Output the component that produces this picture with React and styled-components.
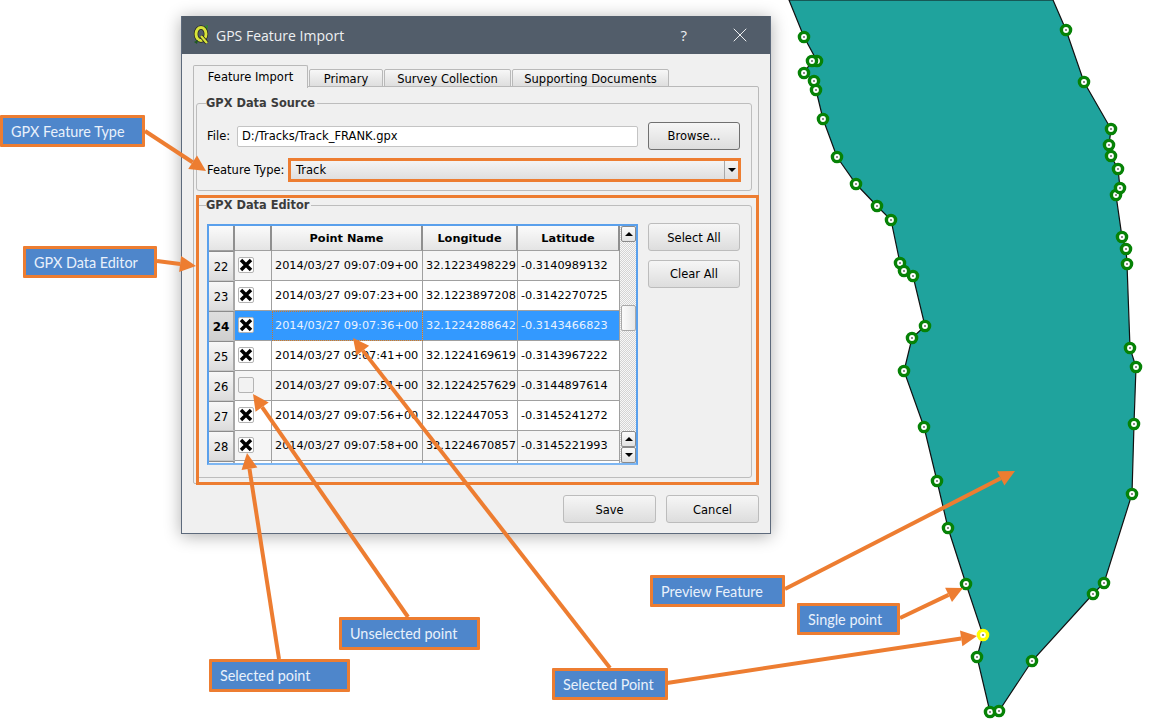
import React from "react";
import styled, { createGlobalStyle } from "styled-components";
import { X } from "lucide-react";

const ORANGE = "#ed7d31";

const rows = [
  { id: 22, on: true, name: "2014/03/27 09:07:09+00", lon: "32.1223498229", lat: "-0.3140989132", tone: "#f5f5f5" },
  { id: 23, on: true, name: "2014/03/27 09:07:23+00", lon: "32.1223897208", lat: "-0.3142270725", tone: "#ffffff" },
  { id: 24, on: true, name: "2014/03/27 09:07:36+00", lon: "32.1224288642", lat: "-0.3143466823", tone: "#f5f5f5", selected: true },
  { id: 25, on: true, name: "2014/03/27 09:07:41+00", lon: "32.1224169619", lat: "-0.3143967222", tone: "#ffffff" },
  { id: 26, on: false, name: "2014/03/27 09:07:51+00", lon: "32.1224257629", lat: "-0.3144897614", tone: "#f5f5f5" },
  { id: 27, on: true, name: "2014/03/27 09:07:56+00", lon: "32.122447053", lat: "-0.3145241272", tone: "#ffffff" },
  { id: 28, on: true, name: "2014/03/27 09:07:58+00", lon: "32.1224670857", lat: "-0.3145221993", tone: "#f5f5f5" },
];

const outline = [
  [789, 0], [804, 37], [817, 61], [812, 61], [804, 73], [814, 81], [816, 90], [823, 119],
  [837, 157], [856, 184], [877, 206], [891, 220], [900, 263], [904, 271], [913, 276],
  [925, 326], [912, 338], [904, 371], [924, 427], [937, 481], [948, 528], [966, 584],
  [983, 635], [977, 657], [990, 712], [999, 711], [1032, 661], [1093, 594], [1104, 583],
  [1132, 494], [1134, 424], [1136, 367], [1130, 348], [1127, 264], [1126, 249], [1122, 237],
  [1116, 195], [1120, 188], [1118, 169], [1111, 156], [1109, 145], [1111, 129], [1084, 82],
  [1066, 30], [1053, 0],
];

const arrows = [
  [145, 131, 206, 171],
  [157, 261, 196, 266],
  [408, 617, 253, 394],
  [279, 659, 247, 453],
  [610, 668, 353, 338],
  [667, 683, 977, 636],
  [785, 589, 1015, 471],
  [900, 618, 963, 588],
];

const GlobalStyle = createGlobalStyle`
  html, body {
    margin: 0;
    padding: 0;
    background: #ffffff;
  }
`;

const Canvas = styled.div`
  position: relative;
  width: 1158px;
  height: 723px;
  overflow: hidden;
  background: #ffffff;
  font-family: "DejaVu Sans", sans-serif;
  font-size: 11.5px;
  color: #000000;
`;

const MapLayer = styled.svg`
  position: absolute;
  left: 0;
  top: 0;
`;

const ArrowLayer = styled.svg`
  position: absolute;
  left: 0;
  top: 0;
  pointer-events: none;
`;

const Dialog = styled.div`
  position: absolute;
  left: 181px;
  top: 16px;
  width: 590px;
  height: 518px;
  box-sizing: border-box;
  display: flex;
  flex-direction: column;
  background: #f0f0f0;
  border: 1px solid #5d6a7c;
  border-top: 0;
  box-shadow: 0 2px 16px rgba(0, 0, 0, 0.32);
`;

const TitleBar = styled.div`
  height: 38px;
  flex: none;
  display: flex;
  align-items: center;
  padding-left: 11px;
  background: #525d6a;
  color: #ffffff;
`;

const TitleText = styled.span`
  margin-left: 5px;
  font-family: "Open Sans", sans-serif;
  font-size: 14px;
  color: #eef0f2;
`;

const HelpMark = styled.span`
  margin-left: auto;
  font-family: "Open Sans", sans-serif;
  font-size: 15px;
  color: #eef0f2;
`;

const CloseIcon = styled(X)`
  margin: 0 18px 0 41px;
  color: #eef0f2;
`;

const DialogBody = styled.div`
  flex: 1;
  display: flex;
  flex-direction: column;
  padding: 11px 11px 10px 11px;
`;

const TabBar = styled.div`
  display: flex;
  align-items: flex-end;
  height: 22px;
  position: relative;
  z-index: 1;
  margin-bottom: -1px;
`;

const Tab = styled.div`
  box-sizing: border-box;
  width: ${({ $w }) => $w}px;
  height: ${({ $active }) => ($active ? "23px" : "18px")};
  margin-right: 1px;
  padding-top: ${({ $active }) => ($active ? "0" : "1px")};
  display: flex;
  align-items: center;
  justify-content: center;
  border: 1px solid #b9b9b9;
  border-bottom: ${({ $active }) => ($active ? "0" : "1px solid #b9b9b9")};
  border-radius: 2px 2px 0 0;
  background: ${({ $active }) =>
    $active ? "#f0f0f0" : "linear-gradient(#f7f7f7, #dedede)"};
  margin-bottom: ${({ $active }) => ($active ? "-1px" : "0")};
`;

const TabPane = styled.div`
  box-sizing: border-box;
  height: 398px;
  padding: 9px 6px 5px 2px;
  border: 1px solid #b9b9b9;
  border-radius: 0 2px 2px 2px;
  display: flex;
  flex-direction: column;
  gap: 7px;
`;

const Group = styled.fieldset`
  box-sizing: border-box;
  height: ${({ $h }) => $h}px;
  flex: none;
  min-width: 0;
  margin: 0;
  padding: 0 11px 0 10px;
  border: 1px solid #bdbdbd;
  border-radius: 3px;
`;

const GroupTitle = styled.legend`
  margin-left: -1px;
  padding: 0 2px 0 0;
  font-size: 11.4px;
  line-height: 14px;
  font-weight: bold;
  color: #3c3c3c;
`;

const FormRow = styled.div`
  display: flex;
  align-items: center;
  height: ${({ $h }) => $h}px;
  margin-top: ${({ $top }) => $top}px;
`;

const FieldLabel = styled.label`
  flex: none;
  width: ${({ $w }) => $w}px;
`;

const TextField = styled.div`
  box-sizing: border-box;
  width: 401px;
  height: 21px;
  margin-right: 10px;
  padding-left: 4px;
  line-height: 19px;
  background: #ffffff;
  border: 1px solid #c4c4c4;
  border-radius: 2px;
`;

const PushButton = styled.button`
  box-sizing: border-box;
  width: ${({ $w }) => $w || 92}px;
  height: 28px;
  padding: 0;
  flex: none;
  font: inherit;
  color: #000000;
  background: linear-gradient(#f6f6f6, #dddddd);
  border: 1px solid ${({ $strong }) => ($strong ? "#707070" : "#bcbcbc")};
  border-radius: 3px;
`;

const FooterButton = styled(PushButton)`
  padding-top: 2px;
`;

const ComboBox = styled.div`
  box-sizing: border-box;
  width: 447px;
  height: 20px;
  display: flex;
  align-items: center;
  padding-left: 5px;
  background: linear-gradient(#f5f5f5, #dedede);
`;

const ComboArrow = styled.span`
  margin-left: auto;
  align-self: stretch;
  width: 13px;
  border-left: 1px solid #a8a8a8;
  display: flex;
  align-items: center;
  justify-content: center;
  &::after {
    content: "";
    border-left: 4px solid transparent;
    border-right: 4px solid transparent;
    border-top: 4px solid #000000;
  }
`;

const EditorRow = styled.div`
  display: flex;
  gap: 10px;
  margin-top: 12px;
`;

const SideButtons = styled.div`
  display: flex;
  flex-direction: column;
  gap: 9px;
  margin-top: -1px;
`;

const DataTable = styled.div`
  box-sizing: border-box;
  width: 431px;
  height: 241px;
  display: flex;
  overflow: hidden;
  font-size: 11.3px;
  border: 2px solid #5aa0ec;
  border-bottom-color: #7db6f2;
  background: #ffffff;
`;

const RowsGrid = styled.div`
  width: 411px;
  flex: none;
  display: grid;
  grid-template-columns: 26px 37px 151px 95px 102px;
  grid-auto-rows: 30px;
  grid-template-rows: 25px;
  align-content: start;
  overflow: hidden;
`;

const HeadCell = styled.div`
  box-sizing: border-box;
  display: flex;
  align-items: center;
  justify-content: center;
  font-size: 11.3px;
  font-weight: bold;
  background: linear-gradient(#fbfbfb, #e4e4e4);
  border-right: 2px solid #8f8f8f;
  border-bottom: 1px solid #a0a0a0;
  &:last-child {
    border-right: 1px solid #a0a0a0;
  }
`;

const RowHead = styled.div`
  box-sizing: border-box;
  display: flex;
  align-items: center;
  justify-content: center;
  padding-top: 2px;
  font-size: ${({ $selected }) => ($selected ? "12px" : "11.5px")};
  font-weight: ${({ $selected }) => ($selected ? "bold" : "normal")};
  background: ${({ $selected }) =>
    $selected
      ? "linear-gradient(#dedede, #cfcfcf)"
      : "linear-gradient(#f8f8f8, #dcdcdc)"};
  border-top: 1px solid #8c8c8c;
  border-right: 2px solid #a8a8a8;
  border-bottom: 1px solid #c8c8c8;
`;

const Cell = styled.div`
  box-sizing: border-box;
  display: flex;
  align-items: center;
  padding-left: 3px;
  white-space: nowrap;
  overflow: hidden;
  color: ${({ $selected }) => ($selected ? "#e9f3ff" : "#000000")};
  background: ${({ $selected, $tone }) => ($selected ? "#3399ff" : $tone)};
  border-right: 1px solid #a0a0a0;
  border-bottom: 1px solid #a0a0a0;
  outline: ${({ $focus }) => ($focus ? "1px dotted #c8792e" : "0")};
  outline-offset: -1px;
`;

const CheckCell = styled(Cell)`
  align-items: flex-start;
  padding: 6px 0 0 3px;
  border-right-color: ${({ $selected }) => ($selected ? "#3399ff" : "#a0a0a0")};
`;

const CheckBox = styled.span`
  box-sizing: border-box;
  width: 16px;
  height: 16px;
  display: flex;
  align-items: center;
  justify-content: center;
  background: ${({ $on }) => ($on ? "#ffffff" : "#f2f2f2")};
  border: 1px solid #b4b4b4;
  border-radius: 2px;
`;

const ScrollBar = styled.div`
  width: 16px;
  flex: none;
  display: flex;
  flex-direction: column;
  background: repeating-conic-gradient(#d4d4d4 0 25%, #f8f8f8 0 50%) 0 0 / 2px 2px;
`;

const ScrollButton = styled.div`
  box-sizing: border-box;
  width: 15px;
  height: 16px;
  margin-left: 1px;
  flex: none;
  display: flex;
  align-items: center;
  justify-content: center;
  background: linear-gradient(#fbfbfb, #e2e2e2);
  border: 1px solid #8a8a8a;
  border-radius: 2px;
  &::after {
    content: "";
    border-left: 4px solid transparent;
    border-right: 4px solid transparent;
    ${({ $down }) =>
      $down ? "border-top: 4px solid #000;" : "border-bottom: 4px solid #000;"}
  }
`;

const ScrollThumb = styled.div`
  box-sizing: border-box;
  width: 15px;
  height: 26px;
  margin: 63px 0 auto 1px;
  background: linear-gradient(90deg, #fbfbfb, #e8e8e8);
  border: 1px solid #a8a8a8;
  border-radius: 2px;
`;

const Footer = styled.div`
  display: flex;
  justify-content: flex-end;
  gap: 10px;
  margin-top: 11px;
`;

const Callout = styled.div`
  position: absolute;
  left: ${({ $x }) => $x}px;
  top: ${({ $y }) => $y}px;
  width: ${({ $w }) => $w}px;
  height: ${({ $h }) => $h}px;
  box-sizing: border-box;
  display: flex;
  align-items: center;
  padding-left: 8px;
  font-family: Lato, sans-serif;
  font-size: 14.4px;
  color: #e9f1fb;
  background: #4e86cb;
  border: 3px solid ${ORANGE};
  border-radius: 1px;
`;

const Highlight = styled.div`
  position: absolute;
  left: ${({ $x }) => $x}px;
  top: ${({ $y }) => $y}px;
  width: ${({ $w }) => $w}px;
  height: ${({ $h }) => $h}px;
  box-sizing: border-box;
  border: 3px solid ${ORANGE};
`;

const QgisLogo = () => (
  <svg width="18" height="20" viewBox="0 0 18 20">
    <path d="M12 1 L15 0 L14 6 Z" fill="#2f8a2f" />
    <ellipse cx="8" cy="9" rx="5" ry="6.5" fill="none" stroke="#222" strokeWidth="4.4" />
    <ellipse cx="8" cy="9" rx="5" ry="6.5" fill="none" stroke="#d8e43a" strokeWidth="3" />
    <path d="M8 11 L14 18" stroke="#222" strokeWidth="4" />
    <path d="M8 11 L14 18" stroke="#d8e43a" strokeWidth="2.4" />
    <path d="M1 17 L5 15 L4 19 Z" fill="#1d5c1d" />
  </svg>
);

const CrossMark = () => (
  <svg width="14" height="14" viewBox="0 0 14 14">
    <path d="M2 2 L12 12 M12 2 L2 12" stroke="#000" strokeWidth="3.5" />
  </svg>
);

const Vertex = ({ x, y, color }) => (
  <g>
    <circle cx={x} cy={y} r="4.6" fill="#ffffff" stroke={color} strokeWidth="3.4" />
    <circle cx={x} cy={y} r="0.8" fill="#000000" />
  </g>
);

const Arrow = ({ from }) => {
  const [x1, y1, x2, y2] = from;
  const angle = Math.atan2(y2 - y1, x2 - x1);
  const len = 16;
  const spread = 8;
  const bx = x2 - len * Math.cos(angle);
  const by = y2 - len * Math.sin(angle);
  const nx = -Math.sin(angle) * spread;
  const ny = Math.cos(angle) * spread;
  return (
    <g fill={ORANGE} stroke="none">
      <line x1={x1} y1={y1} x2={bx} y2={by} stroke={ORANGE} strokeWidth="4" />
      <polygon points={`${x2},${y2} ${bx + nx},${by + ny} ${bx - nx},${by - ny}`} />
    </g>
  );
};

const App = () => {
  return (
    <Canvas>
      <GlobalStyle />

      <MapLayer width="1158" height="723">
        <polygon
          points={outline.map((p) => p.join(",")).join(" ")}
          fill="#1fa39d"
          stroke="#111111"
          strokeWidth="1.2"
        />
        {outline
          .filter((p) => p[1] > 0)
          .map((p) => (
            <Vertex
              key={p.join("-")}
              x={p[0]}
              y={p[1]}
              color={p[0] === 983 ? "#ffff00" : "#068206"}
            />
          ))}
      </MapLayer>

      <Dialog>
        <TitleBar>
          <QgisLogo />
          <TitleText>GPS Feature Import</TitleText>
          <HelpMark>?</HelpMark>
          <CloseIcon size={24} strokeWidth={1} />
        </TitleBar>

        <DialogBody>
          <TabBar>
            <Tab $w={115} $active>Feature Import</Tab>
            <Tab $w={74}>Primary</Tab>
            <Tab $w={127}>Survey Collection</Tab>
            <Tab $w={157}>Supporting Documents</Tab>
          </TabBar>

          <TabPane>
            <Group $h={95}>
              <GroupTitle>GPX Data Source</GroupTitle>
              <FormRow $h={28} $top={12}>
                <FieldLabel $w={30}>File:</FieldLabel>
                <TextField>D:/Tracks/Track_FRANK.gpx</TextField>
                <PushButton $strong>Browse...</PushButton>
              </FormRow>
              <FormRow $h={20} $top={10}>
                <FieldLabel $w={84}>Feature Type:</FieldLabel>
                <ComboBox>
                  Track
                  <ComboArrow />
                </ComboBox>
              </FormRow>
            </Group>

            <Group $h={280}>
              <GroupTitle>GPX Data Editor</GroupTitle>
              <EditorRow>
                <DataTable>
                  <RowsGrid>
                    <HeadCell />
                    <HeadCell />
                    <HeadCell>Point Name</HeadCell>
                    <HeadCell>Longitude</HeadCell>
                    <HeadCell>Latitude</HeadCell>
                    {rows.map((row) => (
                      <React.Fragment key={row.id}>
                        <RowHead $selected={row.selected}>{row.id}</RowHead>
                        <CheckCell $selected={row.selected} $tone={row.tone}>
                          <CheckBox $on={row.on}>{row.on && <CrossMark />}</CheckBox>
                        </CheckCell>
                        <Cell $selected={row.selected} $focus={row.selected} $tone={row.tone}>
                          {row.name}
                        </Cell>
                        <Cell $selected={row.selected} $tone={row.tone}>{row.lon}</Cell>
                        <Cell $selected={row.selected} $tone={row.tone}>{row.lat}</Cell>
                      </React.Fragment>
                    ))}
                    <RowHead />
                    <Cell $tone="#ffffff" />
                    <Cell $tone="#ffffff" />
                    <Cell $tone="#ffffff" />
                    <Cell $tone="#ffffff" />
                  </RowsGrid>
                  <ScrollBar>
                    <ScrollButton />
                    <ScrollThumb />
                    <ScrollButton />
                    <ScrollButton $down />
                  </ScrollBar>
                </DataTable>
                <SideButtons>
                  <FooterButton>Select All</FooterButton>
                  <PushButton>Clear All</PushButton>
                </SideButtons>
              </EditorRow>
            </Group>
          </TabPane>

          <Footer>
            <FooterButton $w={93}>Save</FooterButton>
            <FooterButton $w={93}>Cancel</FooterButton>
          </Footer>
        </DialogBody>
      </Dialog>

      <Highlight $x={288} $y={158} $w={453} $h={24} />
      <Highlight $x={196} $y={195} $w={563} $h={290} />

      <ArrowLayer width="1158" height="723">
        {arrows.map((a) => (
          <Arrow key={a.join("-")} from={a} />
        ))}
      </ArrowLayer>

      <Callout $x={0} $y={115} $w={145} $h={32}>GPX Feature Type</Callout>
      <Callout $x={23} $y={246} $w={134} $h={32}>GPX Data Editor</Callout>
      <Callout $x={339} $y={617} $w={141} $h={33}>Unselected point</Callout>
      <Callout $x={209} $y={659} $w={141} $h={33}>Selected point</Callout>
      <Callout $x={552} $y={668} $w={116} $h={32}>Selected Point</Callout>
      <Callout $x={650} $y={575} $w={135} $h={32}>Preview Feature</Callout>
      <Callout $x={797} $y={603} $w={103} $h={32}>Single point</Callout>
    </Canvas>
  );
};

export default App;
